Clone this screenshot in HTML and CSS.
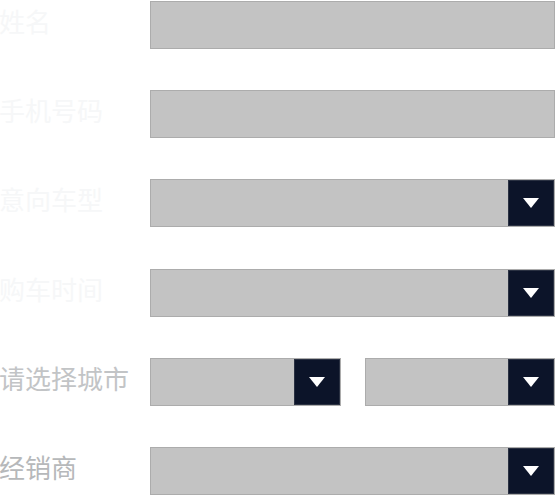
FILE: index.html
```html
<!DOCTYPE html>
<html lang="zh">
<head>
<meta charset="utf-8">
<link rel="stylesheet" href="styles.css">
</head>
<body>
<form class="form">
  <div class="row">
    <label class="label faint">姓名</label>
    <div class="field"></div>
  </div>
  <div class="row">
    <label class="label faint">手机号码</label>
    <div class="field"></div>
  </div>
  <div class="row">
    <label class="label faint">意向车型</label>
    <div class="field select"><span class="btn"><svg viewBox="0 0 16 10" class="tri"><polygon points="0,0 16,0 8,10" fill="#fff"/></svg></span></div>
  </div>
  <div class="row">
    <label class="label faint">购车时间</label>
    <div class="field select"><span class="btn"><svg viewBox="0 0 16 10" class="tri"><polygon points="0,0 16,0 8,10" fill="#fff"/></svg></span></div>
  </div>
  <div class="row">
    <label class="label mid">请选择城市</label>
    <div class="pair">
      <div class="field select"><span class="btn"><svg viewBox="0 0 16 10" class="tri"><polygon points="0,0 16,0 8,10" fill="#fff"/></svg></span></div>
      <div class="field select"><span class="btn"><svg viewBox="0 0 16 10" class="tri"><polygon points="0,0 16,0 8,10" fill="#fff"/></svg></span></div>
    </div>
  </div>
  <div class="row">
    <label class="label dark">经销商</label>
    <div class="field select"><span class="btn"><svg viewBox="0 0 16 10" class="tri"><polygon points="0,0 16,0 8,10" fill="#fff"/></svg></span></div>
  </div>
</form>
</body>
</html>
```

FILE: styles.css
```css
html, body {
  margin: 0;
  padding: 0;
  background: #ffffff;
}
.form {
  display: flex;
  flex-direction: column;
  gap: 41.2px;
  padding-top: 1px;
  width: 555px;
}
.row {
  display: grid;
  grid-template-columns: 150px 1fr;
  align-items: center;
  height: 48px;
}
.label {
  font-family: "Noto Sans CJK SC", "Noto Sans", sans-serif;
  font-size: 26px;
  line-height: 1;
  margin-top: -8px;
  margin-left: -1px;
  white-space: nowrap;
}
.faint { color: #f6f7f8; }
.mid { color: #c2c4c6; }
.dark { color: #b6b8ba; }
.field {
  box-sizing: border-box;
  height: 48px;
  background: #c3c3c3;
  border: 1px solid #acacac;
  display: flex;
  justify-content: flex-end;
}
.pair {
  display: grid;
  grid-template-columns: 191px 190px;
  column-gap: 24px;
}
.btn {
  width: 46px;
  height: 100%;
  background: #0c1429;
  display: flex;
  align-items: center;
  justify-content: center;
  box-shadow: 0 0 0 1px #2a3142 inset;
}
.tri {
  width: 16px;
  height: 10px;
  display: block;
}
```
